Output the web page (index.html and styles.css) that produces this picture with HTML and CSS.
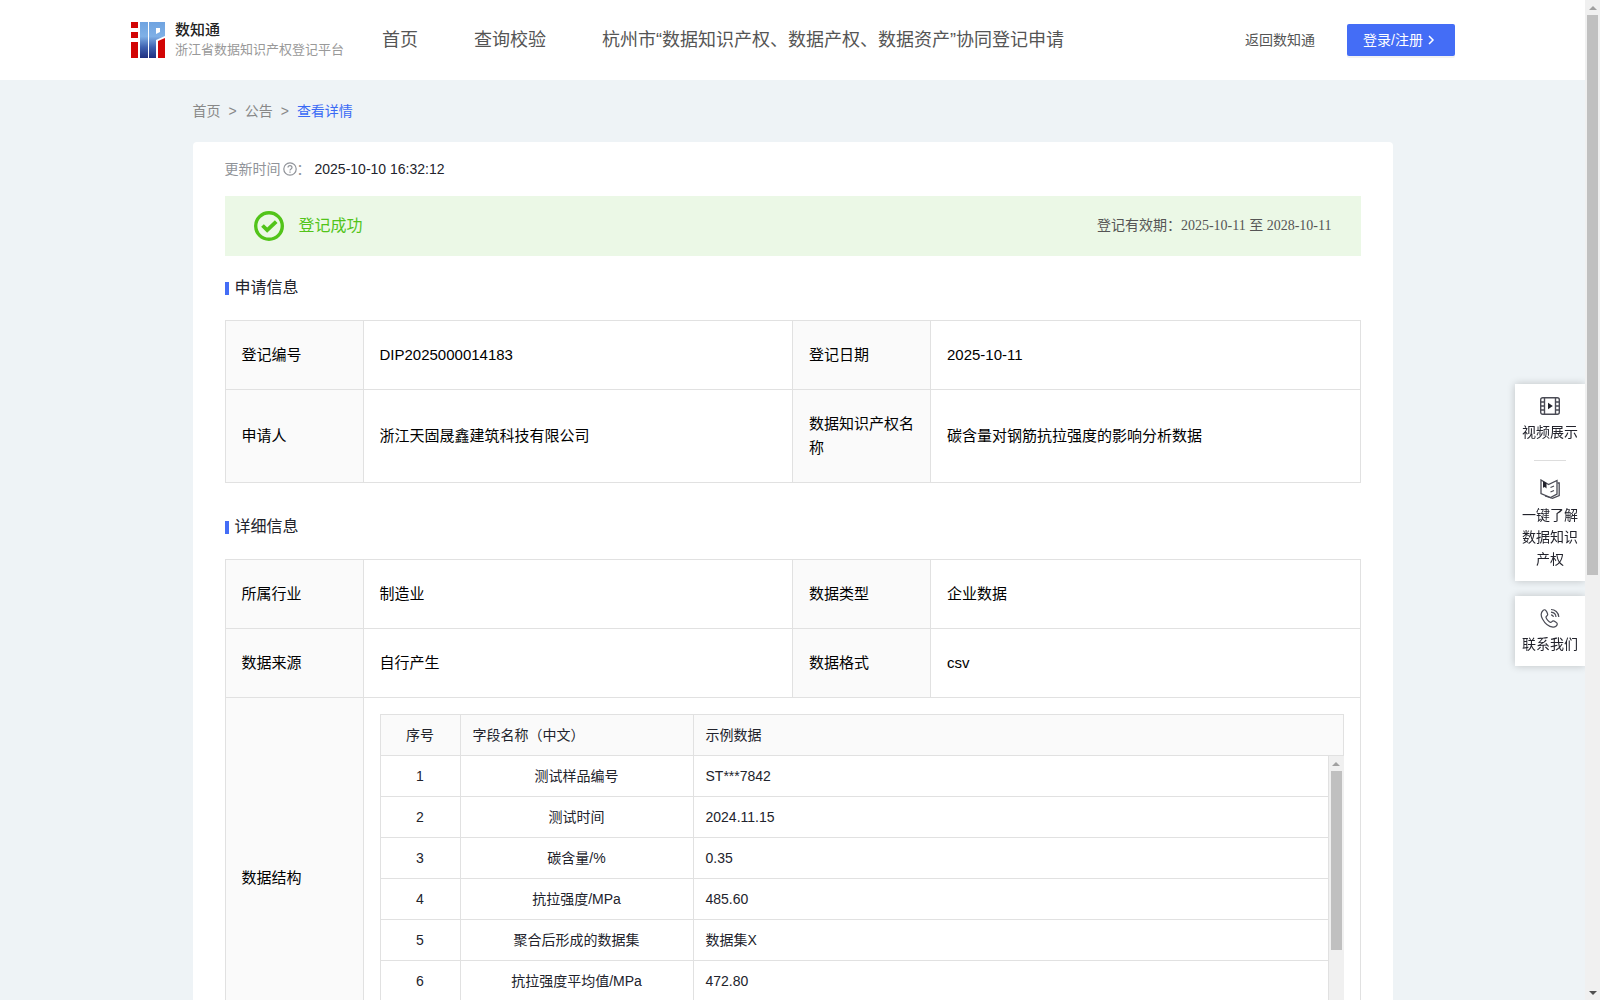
FILE: index.html
```html
<!DOCTYPE html>
<html lang="zh-CN">
     <head>
          <meta charset="UTF-8" />
          <meta
               name="viewport"
               content="width=device-width, initial-scale=1.0" />
          <title>数知通</title>
          <link rel="stylesheet" href="styles.css">
     </head>
     <body>
          <div class="view">
               <header class="header">
                    <a class="logo" href="#">
                         <svg width="34" height="36" viewBox="0 0 34 36">
                              <defs>
                                   <linearGradient id="blue" gradientUnits="userSpaceOnUse" x1="0" y1="0" x2="0" y2="36">
                                        <stop offset="0" stop-color="#6fa3e0" />
                                        <stop offset="0.4" stop-color="#7fb0e6" />
                                        <stop offset="0.7" stop-color="#3f62b0" />
                                        <stop offset="1" stop-color="#1f2f80" />
                                   </linearGradient>
                              </defs>
                              <path fill="#d20505" d="M0 0h7v6H0zM0 10h7v6H0zM0 20h7v16H0zM27 19l7-3v20h-7z" />
                              <path fill="url(#blue)" d="M9 0h8v36H9z" />
                              <path fill="url(#blue)" fill-rule="evenodd" d="M18 0h16v14l-9 4v18h-7zM25 6v6l4-2V6z" />
                         </svg>
                         <span class="logo-text">
                              <strong>数知通</strong>
                              <span>浙江省数据知识产权登记平台</span>
                         </span>
                    </a>
                    <nav class="nav">
                         <a href="#">首页</a>
                         <a href="#">查询校验</a>
                         <a href="#">杭州市“数据知识产权、数据产权、数据资产”协同登记申请</a>
                    </nav>
                    <a class="back" href="#">返回数知通</a>
                    <button class="login" type="button">
                         登录/注册
                         <svg width="8" height="10" viewBox="0 0 8 10">
                              <path d="M2 1l4 4-4 4" fill="none" stroke="#fff" stroke-width="1.5" />
                         </svg>
                    </button>
               </header>

               <main class="page">
                    <div class="crumbs">
                         <a href="#">首页</a>
                         <span>&gt;</span>
                         <a href="#">公告</a>
                         <span>&gt;</span>
                         <a class="current" href="#">查看详情</a>
                    </div>

                    <div class="card">
                         <div class="update">
                              <span>更新时间</span>
                              <svg width="14" height="14" viewBox="0 0 14 14" fill="none" stroke="#909399">
                                   <circle cx="7" cy="7" r="6.2" stroke-width="1.2" />
                                   <path d="M5 5.6c0-2.6 4-2.6 4 0C9 7 7 6.900 7 8.500M7 9.500v1.200" stroke-width="1.2" />
                              </svg>
                              <span>：</span>
                              <time>2025-10-10 16:32:12</time>
                         </div>

                         <div class="status">
                              <svg width="30" height="30" viewBox="0 0 30 30" fill="none" stroke="#52c41a">
                                   <circle cx="15" cy="15" r="13.3" stroke-width="3.4" />
                                   <path d="M8.500 14.500l4.700 4.700 9-8.500" stroke-width="3.800" />
                              </svg>
                              <span class="status-name">登记成功</span>
                              <span class="status-date">登记有效期：2025-10-11 至 2028-10-11</span>
                         </div>

                         <h2 class="title">申请信息</h2>
                         <table class="info">
                              <colgroup>
                                   <col class="col-label"><col><col class="col-label"><col>
                              </colgroup>
                              <tr>
                                   <th>登记编号</th>
                                   <td>DIP2025000014183</td>
                                   <th>登记日期</th>
                                   <td>2025-10-11</td>
                              </tr>
                              <tr>
                                   <th>申请人</th>
                                   <td>浙江天固晟鑫建筑科技有限公司</td>
                                   <th>数据知识产权名称</th>
                                   <td>碳含量对钢筋抗拉强度的影响分析数据</td>
                              </tr>
                         </table>

                         <h2 class="title">详细信息</h2>
                         <table class="info">
                              <colgroup>
                                   <col class="col-label"><col><col class="col-label"><col>
                              </colgroup>
                              <tr>
                                   <th>所属行业</th>
                                   <td>制造业</td>
                                   <th>数据类型</th>
                                   <td>企业数据</td>
                              </tr>
                              <tr>
                                   <th>数据来源</th>
                                   <td>自行产生</td>
                                   <th>数据格式</th>
                                   <td>csv</td>
                              </tr>
                              <tr>
                                   <th>数据结构</th>
                                   <td class="fields-cell" colspan="3">
                                        <table class="fields fields-head">
                                             <tr>
                                                  <th class="no">序号</th>
                                                  <th class="name">字段名称（中文）</th>
                                                  <th>示例数据</th>
                                             </tr>
                                        </table>
                                        <div class="fields-body">
                                             <div class="fields-rows">
                                                  <table class="fields">
                                                       <tr><td class="no">1</td><td class="name">测试样品编号</td><td>ST***7842</td></tr>
                                                       <tr><td class="no">2</td><td class="name">测试时间</td><td>2024.11.15</td></tr>
                                                       <tr><td class="no">3</td><td class="name">碳含量/%</td><td>0.35</td></tr>
                                                       <tr><td class="no">4</td><td class="name">抗拉强度/MPa</td><td>485.60</td></tr>
                                                       <tr><td class="no">5</td><td class="name">聚合后形成的数据集</td><td>数据集X</td></tr>
                                                       <tr><td class="no">6</td><td class="name">抗拉强度平均值/MPa</td><td>472.80</td></tr>
                                                  </table>
                                             </div>
                                             <div class="bar">
                                                  <i class="bar-up"></i>
                                                  <div class="bar-track"><div class="bar-thumb" style="height: 70%"></div></div>
                                                  <i class="bar-down"></i>
                                             </div>
                                        </div>
                                   </td>
                              </tr>
                         </table>
                    </div>
               </main>
          </div>

          <div class="bar">
               <i class="bar-up"></i>
               <div class="bar-track"><div class="bar-thumb" style="height: 57.7%"></div></div>
               <i class="bar-down"></i>
          </div>

          <aside class="side">
               <div class="side-box">
                    <a class="side-item" href="#">
                         <svg width="20" height="20" viewBox="0 0 20 20" fill="none" stroke="#4a4b55" stroke-width="1.4">
                              <rect x="0.700" y="1.700" width="18.600" height="16.600" rx="2" />
                              <path d="M4.500 2v16M15.500 2v16M1 6h3.500M1 10h3.500M1 14h3.500M15.500 6H19M15.500 10H19M15.500 14H19" />
                              <path d="M8 6.800l4.800 3.200L8 13.200z" fill="#22232c" stroke="none" />
                         </svg>
                         <span>视频展示</span>
                    </a>
                    <div class="line"></div>
                    <a class="side-item" href="#">
                         <svg width="20" height="20" viewBox="0 0 20 20" fill="none" stroke="#4a4b55" stroke-width="1.3">
                              <path d="M8.500 5.500L1 1v13.500L10.500 18.500l6.500-3.500V1.500z" />
                              <path d="M17.500 4h1.700v12.500L12.500 19.300 5 17M10.500 8.500l3.500-1.500M10.500 13l3.500-1.500" />
                              <path d="M3 2l3.500 2v5.500L4.800 8 3 8.800z" fill="#22232c" stroke="none" />
                         </svg>
                         <span>一键了解数据知识产权</span>
                    </a>
               </div>
               <div class="side-box">
                    <a class="side-item" href="#">
                         <svg width="20" height="20" viewBox="0 0 20 20" fill="none" stroke="#4a4b55" stroke-width="1.2">
                              <path d="M3 2.500C.800 4.500.600 7.500 2.500 11c2.300 4.300 6.500 7.700 10.500 8.200 2.300.2 4.200-1.600 4.300-3.300 0-1-3-3-4.200-3-1 0-1.500 1.700-2.600 1.500C9 14 6.300 11 6 9.300c-.2-1 1.600-1.400 1.700-2.500C7.800 5.500 6 2 5 1.800c-.6-.1-1.300 0-2 .7z" />
                              <path d="M11 1.500c4 0 7.500 3 7.800 7.500M11 4.200c2.800.2 4.800 2 5 4.800M11 6.800c1.500.1 2.300.9 2.400 2.200" />
                         </svg>
                         <span>联系我们</span>
                    </a>
               </div>
          </aside>
     </body>
</html>
```
FILE: styles.css
```css
* {
     padding: 0;
     margin: 0;
     box-sizing: border-box;
}
body {
     display: flex;
     height: 100vh;
     overflow: hidden;
     background-color: #eef3f6;
     color: #22232c;
     font-family: "Liberation Sans", "Noto Sans CJK SC", sans-serif;
     font-size: 14px;
     line-height: 22px;
}
a {
     color: inherit;
     text-decoration: none;
}
svg {
     flex: none;
}
.view {
     flex: 1;
     min-width: 0;
     overflow-y: auto;
     scrollbar-width: none;
}

/* scrollbars */
.bar {
     display: flex;
     flex-direction: column;
     flex: none;
     width: 15px;
     background-color: #f0f0f0;
}
.bar-up,
.bar-down {
     display: flex;
     align-items: center;
     justify-content: center;
     height: 15px;
}
.bar-up::before,
.bar-down::before {
     content: "";
     border: 4px solid transparent;
     border-top: none;
     border-bottom-color: #a0a0a0;
}
.bar-down::before {
     border-top: 4px solid #505050;
     border-bottom: none;
}
.bar-track {
     flex: 1;
     padding: 0 2px;
}
.bar-thumb {
     background-color: #c0c0c0;
}

/* header */
.header {
     display: flex;
     align-items: center;
     height: 80px;
     padding: 0 130px 0 131px;
     background-color: #fff;
     color: #555;
     white-space: nowrap;
}
.logo {
     display: flex;
     align-items: center;
     gap: 10px;
     width: 251px;
}
.logo-text {
     display: flex;
     flex-direction: column;
     font-size: 13px;
     line-height: 20px;
     color: #999;
}
.logo-text strong {
     font-size: 15px;
     font-weight: 500;
     color: #222;
}
.nav {
     display: flex;
     gap: 56px;
     font-size: 18px;
}
.back {
     margin-left: auto;
}
.login {
     display: flex;
     align-items: center;
     gap: 4px;
     width: 108px;
     height: 32px;
     margin-left: 32px;
     padding: 0 16px;
     border: none;
     border-radius: 2px;
     background-color: #446df6;
     box-shadow: 0 2px 0 rgba(0, 0, 0, 0.05);
     color: #fff;
     font: inherit;
     cursor: pointer;
}

/* page */
.page {
     max-width: 1200px;
     margin: 0 auto;
     padding-bottom: 420px;
}
.crumbs {
     display: flex;
     gap: 8px;
     padding: 20px 0;
     color: #888;
}
.crumbs .current {
     color: #3a6af5;
}
.card {
     padding: 16px 32px 200px;
     border-radius: 4px;
     background-color: #fff;
}
.update {
     display: flex;
     align-items: center;
     color: #909399;
}
.update svg {
     margin-left: 2px;
}
.update time {
     margin-left: 4px;
     color: #22232c;
}
.status {
     display: flex;
     align-items: center;
     gap: 15px;
     height: 60px;
     margin-top: 16px;
     padding: 0 29px;
     background-color: #ebf8e6;
}
.status-name {
     font-size: 16px;
     color: #52c41a;
}
.status-date {
     margin-left: auto;
     font-family: "Liberation Serif", "Noto Sans CJK SC", serif;
     color: #555;
}
.title {
     display: flex;
     align-items: center;
     gap: 6px;
     height: 24px;
     margin: 20px 0;
     font-size: 16px;
     font-weight: 400;
}
.title::before {
     content: "";
     width: 4px;
     height: 13px;
     background-color: #446df6;
}

/* tables */
.info {
     width: 100%;
     border-collapse: collapse;
     table-layout: fixed;
     margin-bottom: 32px;
     color: #000;
     font-size: 15px;
     line-height: 24px;
}
.col-label {
     width: 138px;
}
.info th,
.info td {
     padding: 22px 16px;
     border: 1px solid #e1e1e1;
     text-align: left;
     font-weight: 400;
}
.info th {
     background-color: #fafafa;
}
.info .fields-cell {
     padding: 16px;
}
.fields {
     width: 100%;
     border-collapse: separate;
     border-spacing: 0;
     table-layout: fixed;
     color: #22232c;
     font-size: 14px;
}
.info .fields th,
.info .fields td {
     height: 41px;
     padding: 8px 12px;
     border-width: 0 1px 1px 0;
}
.info .fields .no {
     width: 81px;
     padding: 8px;
     border-left-width: 1px;
     text-align: center;
}
.fields .name {
     width: 233px;
}
.info .fields td.name {
     text-align: center;
}
.info .fields-head th {
     border-top-width: 1px;
}
.fields-body {
     display: flex;
     height: 286px;
}
.fields-rows {
     flex: 1;
     overflow-y: auto;
     scrollbar-width: none;
}

/* floating menu */
.side {
     position: fixed;
     top: 384px;
     right: 15px;
     display: flex;
     flex-direction: column;
     gap: 15px;
     width: 70px;
     clip-path: inset(-10px 0 -10px -10px);
}
.side-box {
     background-color: #fff;
     box-shadow: 0 0 8px rgba(0, 0, 0, 0.2);
}
.side-item {
     display: flex;
     flex-direction: column;
     align-items: center;
     gap: 5px;
     padding: 12px 7px 11px;
     text-align: center;
}
.line {
     width: 32px;
     height: 1px;
     margin: 6px auto;
     background-color: #ddd;
}
```
